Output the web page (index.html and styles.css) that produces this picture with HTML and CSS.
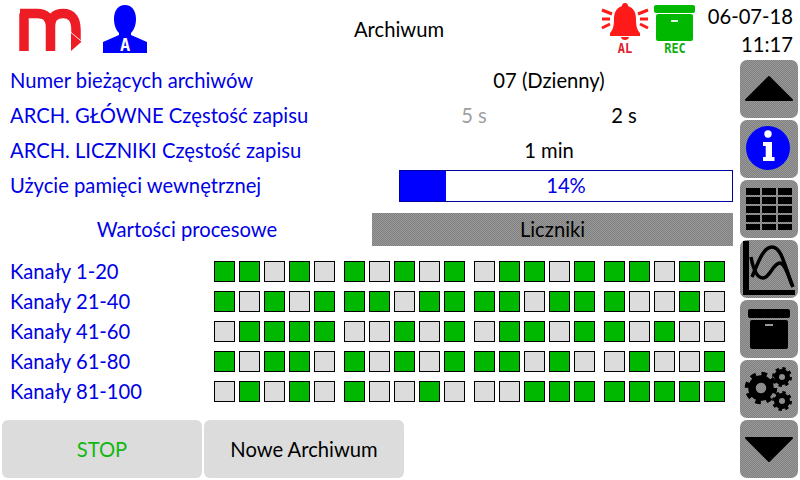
FILE: index.html
```html
<!DOCTYPE html>
<html lang="en">
<head>
    <meta charset="UTF-8">
    <title>Archiwum</title>
    <link rel="stylesheet" href="styles.css">
</head>
<body>
    <div class="screen">
        <header class="top">
            <svg class="logo" width="66" height="46" viewBox="0 0 66 46">
                <path class="logo-m" d="M7 43 V5.5 M3 5.5 H20 Q33.5 5.5 33.5 19 V43 M33.5 19 Q33.5 5.5 46 5.5 Q59 5.5 59 22 V34"/>
                <path class="logo-arrow" d="M54 25 L64.5 33.7 L54 43 Z"/>
            </svg>
            <svg class="user" width="46" height="54" viewBox="0 0 46 54">
                <path class="blue" d="M22 1 C29 1 33 7 33 15 C33 21 31 26 28 29 V31 L44 38 V49 H0 V38 L16 31 V29 C13 26 11 21 11 15 C11 7 15 1 22 1 Z"/>
                <text class="user-a" x="22" y="47">A</text>
            </svg>
            <div class="title">Archiwum</div>
            <div class="status">
                <div class="stat stat-al">
                    <svg width="48" height="38" viewBox="0 0 48 38">
                        <path d="M24 0 C26 0 27 1 27 3 C33 5 35 10 35 16 C35 23 36 27 39 30 V33 H9 V30 C12 27 13 23 13 16 C13 10 15 5 21 3 C21 1 22 0 24 0 Z M20 34 H28 C28 36 26 37 24 37 C22 37 20 36 20 34 Z"/>
                        <path class="rays" d="M1 7 L11 11 M1 16 H9 M1 25 L9 21 M47 7 L37 11 M47 16 H39 M47 25 L39 21"/>
                    </svg>
                    <span>AL</span>
                </div>
                <div class="stat stat-rec">
                    <svg width="42" height="36" viewBox="0 0 42 36">
                        <rect x="0" y="0" width="41" height="8" rx="2"/>
                        <rect x="2" y="9" width="37" height="27" rx="2"/>
                        <rect class="slit" x="17" y="15" width="7" height="2"/>
                    </svg>
                    <span>REC</span>
                </div>
            </div>
            <div class="clock">
                <div>06-07-18</div>
                <div>11:17</div>
            </div>
        </header>

        <div class="body">
            <main class="content">
                <div class="row">
                    <div class="label">Numer bieżących archiwów</div>
                    <div class="value">07 (Dzienny)</div>
                </div>
                <div class="row">
                    <div class="label">ARCH. GŁÓWNE Częstość zapisu</div>
                    <div class="value split"><span class="muted">5 s</span><span>2 s</span></div>
                </div>
                <div class="row">
                    <div class="label">ARCH. LICZNIKI Częstość zapisu</div>
                    <div class="value">1 min</div>
                </div>
                <div class="row">
                    <div class="label">Użycie pamięci wewnętrznej</div>
                    <div class="progress">
                        <div class="progress-fill" style="width: 14%"></div>
                        <div class="progress-text">14%</div>
                    </div>
                </div>

                <div class="tabs">
                    <div class="tab active">Wartości procesowe</div>
                    <div class="tab dither">Liczniki</div>
                </div>

                <div class="channels">
                    <div class="ch-row">
                        <div class="ch-name">Kanały 1-20</div>
                        <div class="group"><i class="on"></i><i class="on"></i><i></i><i class="on"></i><i></i></div>
                        <div class="group"><i class="on"></i><i></i><i class="on"></i><i></i><i class="on"></i></div>
                        <div class="group"><i></i><i class="on"></i><i class="on"></i><i></i><i class="on"></i></div>
                        <div class="group"><i class="on"></i><i class="on"></i><i></i><i class="on"></i><i class="on"></i></div>
                    </div>
                    <div class="ch-row">
                        <div class="ch-name">Kanały 21-40</div>
                        <div class="group"><i class="on"></i><i></i><i class="on"></i><i></i><i class="on"></i></div>
                        <div class="group"><i class="on"></i><i class="on"></i><i></i><i class="on"></i><i class="on"></i></div>
                        <div class="group"><i class="on"></i><i class="on"></i><i></i><i class="on"></i><i class="on"></i></div>
                        <div class="group"><i class="on"></i><i></i><i></i><i class="on"></i><i></i></div>
                    </div>
                    <div class="ch-row">
                        <div class="ch-name">Kanały 41-60</div>
                        <div class="group"><i></i><i class="on"></i><i class="on"></i><i class="on"></i><i class="on"></i></div>
                        <div class="group"><i></i><i></i><i class="on"></i><i></i><i class="on"></i></div>
                        <div class="group"><i></i><i class="on"></i><i class="on"></i><i></i><i class="on"></i></div>
                        <div class="group"><i class="on"></i><i></i><i class="on"></i><i></i><i></i></div>
                    </div>
                    <div class="ch-row">
                        <div class="ch-name">Kanały 61-80</div>
                        <div class="group"><i class="on"></i><i></i><i class="on"></i><i class="on"></i><i></i></div>
                        <div class="group"><i class="on"></i><i></i><i class="on"></i><i></i><i class="on"></i></div>
                        <div class="group"><i class="on"></i><i class="on"></i><i></i><i class="on"></i><i></i></div>
                        <div class="group"><i></i><i class="on"></i><i></i><i></i><i class="on"></i></div>
                    </div>
                    <div class="ch-row">
                        <div class="ch-name">Kanały 81-100</div>
                        <div class="group"><i></i><i class="on"></i><i></i><i class="on"></i><i></i></div>
                        <div class="group"><i class="on"></i><i></i><i></i><i class="on"></i><i></i></div>
                        <div class="group"><i></i><i></i><i class="on"></i><i class="on"></i><i class="on"></i></div>
                        <div class="group"><i class="on"></i><i class="on"></i><i class="on"></i><i class="on"></i><i class="on"></i></div>
                    </div>
                </div>

                <div class="actions">
                    <button class="action stop">STOP</button>
                    <button class="action">Nowe Archiwum</button>
                </div>
            </main>

            <nav class="side">
                <div class="side-btn dither">
                    <svg viewBox="0 0 58 58"><path class="fill-round" d="M29 17 L52 40 H6 Z"/></svg>
                </div>
                <div class="side-btn dither">
                    <svg viewBox="0 0 58 58">
                        <circle class="blue" cx="28" cy="28" r="22"/>
                        <circle class="white" cx="28" cy="14" r="3.7"/>
                        <path class="white" d="M23 22 H32 V37 H34.5 V41 H23 V37 H25.7 V26 H23 Z"/>
                    </svg>
                </div>
                <div class="side-btn dither">
                    <svg viewBox="0 0 58 58">
                        <path d="M6 8 h14 v7 h-14 Z M22 8 h14 v7 h-14 Z M38 8 h14 v7 h-14 Z
                                 M6 17 h14 v7 h-14 Z M22 17 h14 v7 h-14 Z M38 17 h14 v7 h-14 Z
                                 M6 26 h14 v7 h-14 Z M22 26 h14 v7 h-14 Z M38 26 h14 v7 h-14 Z
                                 M6 35 h14 v7 h-14 Z M22 35 h14 v7 h-14 Z M38 35 h14 v7 h-14 Z
                                 M6 44 h14 v6 h-14 Z M22 44 h14 v6 h-14 Z M38 44 h14 v6 h-14 Z"/>
                    </svg>
                </div>
                <div class="side-btn dither">
                    <svg viewBox="0 0 58 58">
                        <path d="M3 1 H9 V50 H55 V55 H3 Z"/>
                        <path class="curve" d="M11 17 C13 28 17 38 23 38 C30 38 33 23 40 23 C45 23 48 35 52 45"/>
                        <path class="curve" d="M12 37 C18 23 23 7 32 7 C42 7 45 28 53 47"/>
                    </svg>
                </div>
                <div class="side-btn dither">
                    <svg viewBox="0 0 58 58">
                        <rect x="8" y="9" width="42" height="9" rx="2"/>
                        <rect x="10" y="20" width="38" height="29" rx="2"/>
                        <rect class="slit-gray" x="25" y="24" width="8" height="2"/>
                    </svg>
                </div>
                <div class="side-btn dither">
                    <svg viewBox="0 0 58 58">
                        <circle class="ring" cx="21" cy="28" r="9" stroke-width="7.5"/>
                        <circle class="teeth" cx="21" cy="28" r="14" stroke-width="4.5" stroke-dasharray="5.5 5.5"/>
                        <circle class="ring" cx="42" cy="17" r="5.5" stroke-width="5"/>
                        <circle class="teeth" cx="42" cy="17" r="8.5" stroke-width="3" stroke-dasharray="3.34 3.34"/>
                        <circle class="ring" cx="42" cy="41" r="5.5" stroke-width="5"/>
                        <circle class="teeth" cx="42" cy="41" r="8.5" stroke-width="3" stroke-dasharray="3.34 3.34"/>
                    </svg>
                </div>
                <div class="side-btn dither">
                    <svg viewBox="0 0 58 58"><path class="fill-round" d="M6 18 H52 L29 41 Z"/></svg>
                </div>
            </nav>
        </div>
    </div>
</body>
</html>
```

FILE: styles.css
```css
* {
    padding: 0;
    margin: 0;
    box-sizing: border-box;
}

body {
    width: 800px;
    height: 480px;
    overflow: hidden;
    background-color: white;
    font-family: "Lato", sans-serif;
    font-size: 20.2px;
    color: black;
}

.screen {
    height: 480px;
    display: flex;
    flex-direction: column;
}

/* top bar */
.top {
    height: 60px;
    display: flex;
    align-items: flex-start;
    position: relative;
}

.logo {
    margin: 8px 0 0 17px;
}

.logo-m {
    fill: none;
    stroke: #ee1c25;
    stroke-width: 9.5;
}

.logo-arrow {
    fill: #ee1c25;
    stroke: white;
    stroke-width: 1.5;
    paint-order: stroke;
}

.user {
    margin: 4px 0 0 20px;
}

.blue {
    fill: #0000ff;
}

.white {
    fill: white;
}

.user-a {
    fill: white;
    font-family: "DejaVu Sans Mono", monospace;
    font-weight: bold;
    font-size: 17px;
    text-anchor: middle;
}

.title {
    position: absolute;
    left: 0;
    width: 798px;
    top: 17px;
    text-align: center;
}

.status {
    margin-left: auto;
    display: flex;
    gap: 5px;
    padding-top: 3px;
}

.stat {
    display: flex;
    flex-direction: column;
    align-items: center;
    font-family: "DejaVu Sans Mono", monospace;
    font-weight: bold;
    font-size: 12px;
    line-height: 14px;
}

.stat span {
    display: block;
    transform: scaleY(1.15);
}

.stat-al {
    color: #e0202c;
}

.stat-al svg {
    fill: #ff1a1a;
}

.rays {
    fill: none;
    stroke: #ff1a1a;
    stroke-width: 3;
}

.stat-rec {
    color: #12b012;
    padding-top: 2px;
}

.stat-rec svg {
    fill: #00b800;
}

.slit {
    fill: #dff5df;
}

.clock {
    width: 87px;
    margin: 2px 7px 0 10px;
    text-align: right;
    line-height: 28px;
}

.body {
    flex: 1;
    display: flex;
}

/* left side */
.content {
    width: 740px;
    padding-top: 3px;
}

.row {
    height: 35px;
    display: flex;
    align-items: center;
    padding-left: 10px;
}

.label {
    width: 389px;
    margin-bottom: 2px;
    color: #0000e6;
}

.value {
    width: 300px;
    margin-bottom: 2px;
    text-align: center;
}

.split {
    display: flex;
}

.split span {
    width: 150px;
}

.muted {
    color: #a0a0a0;
}

.progress {
    width: 334px;
    height: 32px;
    border: 1px solid #0000a0;
    position: relative;
    display: flex;
}

.progress-fill {
    background-color: #0000ff;
}

.progress-text {
    position: absolute;
    left: 0;
    right: 0;
    top: 2px;
    text-align: center;
    color: #0000e6;
}

.dither {
    background-color: #8c8c8c;
    background-image: conic-gradient(#808080 25%, #999 0 50%, #808080 0 75%, #999 0);
    background-size: 2px 2px;
}

.tabs {
    display: flex;
    margin: 10px 7px 0 2px;
    height: 33px;
}

.tab {
    display: flex;
    align-items: center;
    justify-content: center;
    padding-bottom: 2px;
}

.tab.active {
    width: 370px;
    color: #0000e6;
}

.tab.dither {
    flex: 1;
}

.channels {
    margin-top: 10px;
}

.ch-row {
    height: 30px;
    display: flex;
    align-items: center;
    padding-left: 10px;
}

.ch-name {
    width: 204px;
    color: #0000e6;
}

.group {
    display: flex;
    gap: 4px;
    margin-right: 9px;
}

.group i {
    display: block;
    width: 21px;
    height: 21px;
    border: 1px solid black;
    background-color: #dcdcdc;
}

.group i.on {
    background-color: #00b800;
}

.actions {
    display: flex;
    gap: 2px;
    margin: 14px 0 0 2px;
}

.action {
    width: 200px;
    height: 58px;
    border: none;
    border-radius: 6px;
    background-color: #dcdcdc;
    font-family: "Lato", sans-serif;
    font-size: 20.2px;
    color: black;
}

.action.stop {
    color: #12b812;
}

/* right buttons */
.side {
    width: 60px;
    display: flex;
    flex-direction: column;
    gap: 2px;
}

.side-btn {
    width: 58px;
    height: 58px;
    border-radius: 7px;
}

.side-btn svg {
    display: block;
    width: 58px;
    height: 58px;
}

.fill-round {
    stroke: black;
    stroke-width: 2;
    stroke-linejoin: round;
}

.curve {
    fill: none;
    stroke: black;
    stroke-width: 3.5;
}

.slit-gray {
    fill: #999;
}

.ring,
.teeth {
    fill: none;
    stroke: black;
}
```
